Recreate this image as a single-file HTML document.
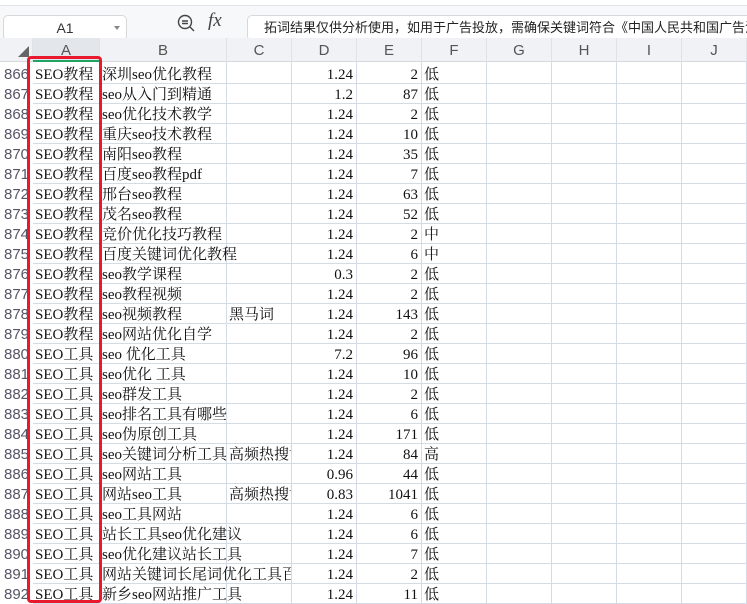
<!DOCTYPE html>
<html><head><meta charset="utf-8"><style>
*{margin:0;padding:0;box-sizing:border-box}
body{width:747px;height:604px;overflow:hidden;background:#fff;position:relative;font-family:"Liberation Serif","Noto Serif CJK SC",serif}
.tb{position:absolute;left:0;top:0;width:747px;height:38px;background:#f7f8fa;border-top:5px solid #fff}
.tb:before{content:"";position:absolute;left:0;top:0;width:747px;height:1px;background:#e3e5e8}
.nb{position:absolute;left:3px;top:10px;width:124px;height:26px;border:1px solid #d6d8dc;border-radius:5px;background:#fff;font:14px "Liberation Sans",sans-serif;color:#333;text-align:center;line-height:24px}
.nb:after{content:"";position:absolute;right:6px;top:10px;border:3px solid transparent;border-top:4px solid #888}
.fb{position:absolute;left:247px;top:10px;width:520px;height:26px;border:1px solid #d6d8dc;border-radius:5px;background:#fff;font:13px "Liberation Sans","Noto Sans CJK SC",sans-serif;color:#222;line-height:24px;padding-left:16px;white-space:nowrap;overflow:hidden}
.hd{position:absolute;top:38px;height:24px;background:#f1f2f5;border-bottom:1px solid #d4d8de;border-right:1px solid #dfe2e7;font:15px "Liberation Sans",sans-serif;color:#555;text-align:center;line-height:26px}
.rh{position:absolute;left:0;width:33px;height:20px;font:15px "Liberation Sans",sans-serif;color:#556;line-height:22px;padding-left:4px;overflow:hidden;white-space:nowrap;background:#fff}
.ln{position:absolute;background:#d5dbe6}
.t{position:absolute;height:20px;font-size:15px;line-height:22px;color:#111;white-space:nowrap;overflow:hidden;padding-left:2px}
.r{text-align:right;padding-right:3px;padding-left:0}
</style></head><body>
<div class="tb">
<div class="nb">A1</div>
<svg style="position:absolute;left:176px;top:8px" width="22" height="22" viewBox="0 0 22 22"><circle cx="9" cy="9" r="6.5" fill="none" stroke="#444" stroke-width="1.4"/><path d="M6 8h6M6 10.5h6M14 14l4 4" stroke="#444" stroke-width="1.4"/></svg>
<div style="position:absolute;left:208px;top:5px;font:italic 19px 'Liberation Serif',serif;color:#444">fx</div>
<div class="fb">拓词结果仅供分析使用，如用于广告投放，需确保关键词符合《中国人民共和国广告法》等法律法规</div>
</div>
<div class="hd" style="left:0;width:33px;background:#f1f2f5"></div>
<div style="position:absolute;left:18px;top:46px;width:0;height:0;border-left:11px solid transparent;border-bottom:11px solid #666"></div>
<div id="H"></div>
<div id="G"></div>
<div style="position:absolute;left:33px;top:60px;width:67px;height:2px;background:#21a366"></div>
<div style="position:absolute;left:27px;top:56px;width:75px;height:547px;border:3px solid #e8192c;border-radius:4px"></div>
<script>
var cols=[["A",33,67],["B",100,127],["C",227,65],["D",292,65],["E",357,65],["F",422,65],["G",487,65],["H",552,65],["I",617,65],["J",682,65]];
var h="";cols.forEach(function(c,i){h+='<div class="hd" style="left:'+c[1]+'px;width:'+c[2]+'px;'+(i==0?'background:#e3e6eb':'')+'">'+c[0]+'</div>'});
document.getElementById("H").outerHTML=h;
var d=[["SEO教程","深圳seo优化教程","","1.24","2","低"],["SEO教程","seo从入门到精通","","1.2","87","低"],["SEO教程","seo优化技术教学","","1.24","2","低"],["SEO教程","重庆seo技术教程","","1.24","10","低"],["SEO教程","南阳seo教程","","1.24","35","低"],["SEO教程","百度seo教程pdf","","1.24","7","低"],["SEO教程","邢台seo教程","","1.24","63","低"],["SEO教程","茂名seo教程","","1.24","52","低"],["SEO教程","竞价优化技巧教程","","1.24","2","中"],["SEO教程","百度关键词优化教程","","1.24","6","中"],["SEO教程","seo教学课程","","0.3","2","低"],["SEO教程","seo教程视频","","1.24","2","低"],["SEO教程","seo视频教程","黑马词","1.24","143","低"],["SEO教程","seo网站优化自学","","1.24","2","低"],["SEO工具","seo 优化工具","","7.2","96","低"],["SEO工具","seo优化 工具","","1.24","10","低"],["SEO工具","seo群发工具","","1.24","2","低"],["SEO工具","seo排名工具有哪些","","1.24","6","低"],["SEO工具","seo伪原创工具","","1.24","171","低"],["SEO工具","seo关键词分析工具","高频热搜词","1.24","84","高"],["SEO工具","seo网站工具","","0.96","44","低"],["SEO工具","网站seo工具","高频热搜词","0.83","1041","低"],["SEO工具","seo工具网站","","1.24","6","低"],["SEO工具","站长工具seo优化建议","","1.24","6","低"],["SEO工具","seo优化建议站长工具","","1.24","7","低"],["SEO工具","网站关键词长尾词优化工具百度","","1.24","2","低"],["SEO工具","新乡seo网站推广工具","","1.24","11","低"]];
var g="";
cols.forEach(function(c){g+='<div class="ln" style="left:'+(c[1]+c[2]-1)+'px;top:62px;width:1px;height:542px"></div>'});
d.forEach(function(r,i){var t=64+i*20;g+='<div class="rh" style="top:'+t+'px">'+(866+i)+'</div>';
g+='<div class="ln" style="left:33px;top:'+(t+19)+'px;width:714px;height:1px"></div>';
for(var j=0;j<6;j++){var c=cols[j];var v=r[j];if(!v)continue;var w=c[2];if(j==1&&!r[2])w=192;
var cl=(j==3||j==4)?"t r":"t";
if(j==1&&!r[2])g+='<div style="position:absolute;left:227px;top:'+t+'px;width:64px;height:19px;background:#fff"></div>';
g+='<div class="'+cl+'" style="left:'+c[1]+'px;top:'+t+'px;width:'+(w-1)+'px">'+v+'</div>'}});
document.getElementById("G").outerHTML=g;
</script>
</body></html>
